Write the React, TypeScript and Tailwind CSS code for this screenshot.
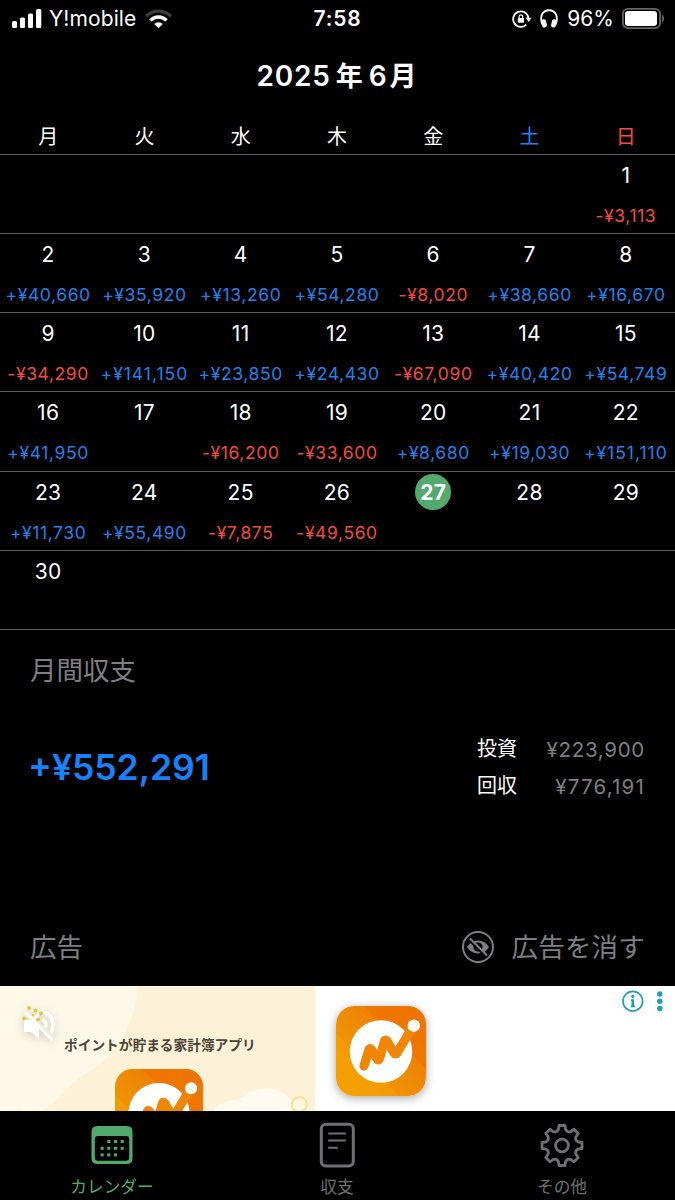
import React from 'react';
import clsx from 'clsx';

interface DayEntry {
  day: number;
  amount?: string;
}

const weekdays = ['月', '火', '水', '木', '金', '土', '日'];

const TODAY = 27;
const LEADING_BLANKS = 6;

const entries: DayEntry[] = [
  { day: 1, amount: '-¥3,113' },
  { day: 2, amount: '+¥40,660' },
  { day: 3, amount: '+¥35,920' },
  { day: 4, amount: '+¥13,260' },
  { day: 5, amount: '+¥54,280' },
  { day: 6, amount: '-¥8,020' },
  { day: 7, amount: '+¥38,660' },
  { day: 8, amount: '+¥16,670' },
  { day: 9, amount: '-¥34,290' },
  { day: 10, amount: '+¥141,150' },
  { day: 11, amount: '+¥23,850' },
  { day: 12, amount: '+¥24,430' },
  { day: 13, amount: '-¥67,090' },
  { day: 14, amount: '+¥40,420' },
  { day: 15, amount: '+¥54,749' },
  { day: 16, amount: '+¥41,950' },
  { day: 17 },
  { day: 18, amount: '-¥16,200' },
  { day: 19, amount: '-¥33,600' },
  { day: 20, amount: '+¥8,680' },
  { day: 21, amount: '+¥19,030' },
  { day: 22, amount: '+¥151,110' },
  { day: 23, amount: '+¥11,730' },
  { day: 24, amount: '+¥55,490' },
  { day: 25, amount: '-¥7,875' },
  { day: 26, amount: '-¥49,560' },
  { day: 27 },
  { day: 28 },
  { day: 29 },
  { day: 30 },
];

const cells: (DayEntry | null)[] = [...Array(LEADING_BLANKS).fill(null), ...entries];
const weeks = Array.from({ length: Math.ceil(cells.length / 7) }, (_, i) =>
  Array.from({ length: 7 }, (_, j) => cells[i * 7 + j] ?? null)
);

// The digit 1 is narrow, so amounts with many of them get looser tracking
const hasManyOnes = (amount: string) => amount.split('1').length > 3;

const StatusBar = () => (
  <div className="grid h-[37px] grid-cols-3 items-center pl-3 pr-[10px] text-[21px] leading-none text-white">
    <div className="flex items-center">
      <svg width="30" height="19" viewBox="0 0 30 19" fill="currentColor">
        <rect x="0" y="12" width="5" height="7" rx="1.5" />
        <rect x="8" y="8.5" width="5" height="10.5" rx="1.5" />
        <rect x="16" y="4.5" width="5" height="14.5" rx="1.5" />
        <rect x="24" y="0" width="5.3" height="19" rx="1.5" />
      </svg>
      <span className="ml-[7px] tracking-[0.1px]">Y!mobile</span>
      <svg className="ml-[9px]" width="27" height="20" viewBox="0 0 27 20" fill="none" strokeWidth="3.4">
        <path d="M1.2 7.2 A17.4 17.4 0 0 1 25.8 7.2" stroke="#3c3c3c" />
        <path d="M5.4 11.4 A11.5 11.5 0 0 1 21.6 11.4" stroke="#fff" />
        <path d="M13.5 19.3 L9.2 15 A6.1 6.1 0 0 1 17.8 15 Z" fill="#fff" />
      </svg>
    </div>
    <div className="pr-0.5 text-center font-semibold tracking-[0.8px]">7:58</div>
    <div className="flex items-center justify-end">
      <svg width="20" height="18" viewBox="0 0 20 18" fill="none" stroke="currentColor">
        <path d="M14.3 14.6 A7.7 7.7 0 1 1 16.5 8.2" strokeWidth="1.7" />
        <path d="M13.6 7.8 H19.6 L16.7 12 Z" fill="currentColor" stroke="none" />
        <rect x="5.8" y="8" width="6.2" height="4.7" rx="0.8" fill="currentColor" stroke="none" />
        <path d="M7.1 8.4 V6.7 A1.8 1.8 0 0 1 10.7 6.7 V8.4" strokeWidth="1.2" />
      </svg>
      <svg className="ml-2" width="18" height="19" viewBox="0 0 18 19" fill="none" stroke="currentColor">
        <path d="M2.6 15.5 C-1 7.5 2.6 1.2 9 1.2 S19 7.5 15.4 15.5" strokeWidth="1.9" />
        <rect x="1.8" y="10.2" width="4.8" height="8.2" rx="2" fill="currentColor" stroke="none" transform="rotate(-14 4.3 14.7)" />
        <rect x="11.4" y="10.2" width="4.8" height="8.2" rx="2" fill="currentColor" stroke="none" transform="rotate(14 13.7 14.7)" />
      </svg>
      <span className="ml-[9px]">96%</span>
      <svg className="ml-[8px]" width="43" height="21" viewBox="0 0 43 21">
        <rect x="0.9" y="0.9" width="37.2" height="19.2" rx="5" fill="none" stroke="#666" strokeWidth="1.8" />
        <rect x="3" y="3" width="32" height="15" rx="3" fill="#fff" />
        <path d="M40 7 C42.8 8 42.8 13 40 14 Z" fill="#666" />
      </svg>
    </div>
  </div>
);

const DayCell = ({ entry }: { entry: DayEntry | null }) => {
  if (!entry) return <div />;
  const isToday = entry.day === TODAY;
  return (
    <div className="flex flex-col items-center">
      <span
        className={clsx(
          'mt-[2px] flex h-9 w-9 items-center justify-center rounded-full pt-px text-[21px] leading-none tracking-[0.3px]',
          isToday ? 'bg-[#52ab6c] font-bold text-white' : 'text-white'
        )}
      >
        {entry.day}
      </span>
      {entry.amount && (
        <span
          className={clsx(
            'mt-[11px] whitespace-nowrap text-[17.5px] leading-[24px]',
            hasManyOnes(entry.amount) ? 'tracking-[1px]' : 'tracking-[0.6px]',
            entry.amount.startsWith('-') ? 'text-[#f14b40]' : 'text-[#2381e8]'
          )}
        >
          {entry.amount}
        </span>
      )}
    </div>
  );
};

const Calendar = () => (
  <section className="border-b border-[#5c5c5e]">
    <div className="grid h-[38px] grid-cols-7 items-center pr-px pt-1 text-center text-[20px] leading-none">
      {weekdays.map(label => (
        <span
          key={label}
          className={clsx(
            label === '土' && 'text-[#1a84f5]',
            label === '日' && 'text-[#f14b40]',
            label !== '土' && label !== '日' && 'text-white'
          )}
        >
          {label}
        </span>
      ))}
    </div>
    {weeks.map((week, i) => (
      <div key={i} className="grid h-[79.15px] grid-cols-7 border-t border-[#5c5c5e] pr-px">
        {week.map((entry, j) => (
          <DayCell key={j} entry={entry} />
        ))}
      </div>
    ))}
  </section>
);

const Summary = () => (
  <section className="h-[273px] px-[30px] pt-5">
    <h2 className="text-[26.5px] leading-[40px] text-[#7f7f83]">月間収支</h2>
    <div className="mt-[41px] flex items-center justify-between">
      <span className="-ml-[2px] text-[35.5px] font-semibold leading-[74px] text-[#1683fb]">+¥552,291</span>
      <div className="text-[20px] leading-[37px]">
        <div className="flex justify-end">
          <span className="text-white">投資</span>
          <span className="w-32 text-right text-[20.5px] tracking-[0.7px] text-[#7f7f83]">¥223,900</span>
        </div>
        <div className="flex justify-end">
          <span className="text-white">回収</span>
          <span className="w-32 text-right text-[20.5px] tracking-[1.2px] text-[#7f7f83]">¥776,191</span>
        </div>
      </div>
    </div>
  </section>
);

const HideAdIcon = () => (
  <svg width="34" height="34" viewBox="0 0 34 34" fill="none">
    <circle cx="17" cy="17" r="15" stroke="#7f7f83" strokeWidth="2" />
    <path d="M6 17 Q10 10.5 17 10.5 Q24 10.5 28 17 Q24 23.5 17 23.5 Q10 23.5 6 17 Z" fill="#7f7f83" />
    <circle cx="17" cy="17" r="4.6" fill="#000" />
    <path d="M8.5 10.5 L24 26" stroke="#000" strokeWidth="2" />
    <path d="M9.5 9 L25.5 25" stroke="#7f7f83" strokeWidth="1.9" strokeLinecap="round" />
  </svg>
);

const AppLogo = ({ id, className }: { id: string; className?: string }) => (
  <svg className={className} viewBox="0 0 90 90">
    <defs>
      <linearGradient id={id} x1="0" y1="1" x2="1" y2="0">
        <stop offset="0" stopColor="#f5a400" />
        <stop offset="0.5" stopColor="#ee8b05" />
        <stop offset="1" stopColor="#ec6c03" />
      </linearGradient>
      <clipPath id={`${id}-clip`}>
        <rect width="90" height="90" rx="18" />
      </clipPath>
    </defs>
    <g clipPath={`url(#${id}-clip)`}>
      <rect width="90" height="90" fill={`url(#${id})`} />
      <path d="M28 0 H90 V63 Z" fill="#ef7400" opacity="0.75" />
      <path d="M0 27 L63 90 H0 Z" fill="#f5a100" opacity="0.6" />
      <circle cx="45" cy="45.5" r="31.3" fill="#fff" />
      <path
        d="M28 60 L33 43.5 Q34 41.5 35.5 43.5 L41 53 Q42.5 55 43.5 52.5 L48.5 35 Q49.5 33 51 35 L58 47 Q59.5 49 61 47 L76 22"
        fill="none"
        stroke="#ef8605"
        strokeWidth="9.2"
        strokeLinecap="round"
        strokeLinejoin="round"
      />
      <circle cx="77.8" cy="19.7" r="6.2" fill="#fff" />
    </g>
  </svg>
);

const MutedIcon = () => (
  <svg width="40" height="42" viewBox="0 0 40 42" fill="none" className="drop-shadow-[0_2px_5px_rgba(0,0,0,0.18)]">
    <path d="M5 17 H11 L20 10 V36 L12 29 H5 Z" fill="#fff" />
    <path d="M24 9 C33 11 37 21 31 31" stroke="#fff" strokeWidth="3.6" />
    <path d="M23 17 C27 18 28 22 26 25" stroke="#fff" strokeWidth="3.6" />
    <path d="M9 8.5 L35 35" stroke="#f3ead2" strokeWidth="2" />
    <path d="M7 10 L33.5 37" stroke="#fff" strokeWidth="3.2" />
    <g fill="#dcc936">
      <circle cx="10" cy="5" r="1.9" />
      <circle cx="16.5" cy="7.5" r="1.9" />
      <circle cx="22" cy="10.5" r="1.9" />
      <circle cx="5" cy="15.5" r="1.9" />
      <circle cx="19" cy="16.5" r="1.9" />
      <circle cx="14" cy="12" r="1.2" />
    </g>
  </svg>
);

const AdBanner = () => (
  <div className="flex h-[125.5px] bg-white">
    <div className="relative h-full w-[315px] overflow-hidden bg-[#fdf2d8]">
      <svg className="absolute inset-0" width="315" height="126" viewBox="0 0 315 126">
        <path d="M0 0 H137 C138 30 119 66 92 84 C66 98 58 119 38 126 H0 Z" fill="#fef8e9" />
        <path d="M213 126 C220 111 239 117 247 108 C262 98 290 100 296 126 Z" fill="#fffaf0" />
        <circle cx="299.3" cy="118.5" r="7.5" fill="#fff8df" stroke="#f5e391" strokeWidth="2" />
        <path d="M14 126 Q19 123 24 126 Z" fill="#f5e58c" />
      </svg>
      <div className="absolute left-[19px] top-[17px]">
        <MutedIcon />
      </div>
      <p className="absolute left-[64px] top-[49px] whitespace-nowrap text-[13.7px] font-bold leading-[20px] text-[#4d4438]">
        ポイントが貯まる家計簿アプリ
      </p>
      <AppLogo id="banner-logo" className="absolute left-[115px] top-[83px] h-[88px] w-[88px]" />
    </div>
    <div className="flex flex-1 items-start justify-between overflow-hidden pl-[21px] pr-[9px]">
      <AppLogo id="store-logo" className="mt-5 h-[90px] w-[90px] rounded-[18px] shadow-[0_2px_10px_rgba(0,0,0,0.35)]" />
      <svg className="mt-1" width="46" height="24" viewBox="0 0 46 24" fill="#1f9db5">
        <circle cx="12.8" cy="11.2" r="9.8" fill="none" stroke="#1f9db5" strokeWidth="1.7" />
        <circle cx="12.8" cy="6.3" r="1.6" />
        <path d="M10.9 9.3 H14.1 V15.6 H15 V17.2 H10.9 V15.6 H11.5 V10.9 H10.9 Z" />
        <circle cx="39.8" cy="4" r="2.7" />
        <circle cx="39.8" cy="11.3" r="2.7" />
        <circle cx="39.8" cy="18.5" r="2.7" />
      </svg>
    </div>
  </div>
);

const CalendarIcon = () => (
  <svg width="44" height="46" viewBox="0 0 44 46" fill="#52ab6c">
    <path
      fillRule="evenodd"
      d="M7.5 4 H36.5 Q42.5 4 42.5 10 V36 Q42.5 42 36.5 42 H7.5 Q1.5 42 1.5 36 V10 Q1.5 4 7.5 4 Z M8 14 Q4.8 14 4.8 17 V35.5 Q4.8 38.7 8 38.7 H36 Q39.2 38.7 39.2 35.5 V17 Q39.2 14 36 14 Z"
    />
    {[17.3, 24, 30.7].map(x => <rect key={x} x={x} y="18" width="3" height="3" />)}
    {[10.6, 17.3, 24, 30.7].map(x => <rect key={x} x={x} y="24.8" width="3" height="3" />)}
    {[10.6, 17.3, 24].map(x => <rect key={x} x={x} y="31.4" width="3" height="3" />)}
  </svg>
);

const NoteIcon = () => (
  <svg width="44" height="46" viewBox="0 0 44 46" fill="none" stroke="#707074">
    <rect x="6.3" y="2.3" width="32" height="41.6" rx="4.5" strokeWidth="3" />
    <path d="M13.2 11.5 H30.8 M13.2 18.4 H30.8 M13.2 25.7 H22.8" strokeWidth="2" />
  </svg>
);

const GearIcon = () => {
  const profile = [[-5.4, -14], [-3.6, -16], [-3, -20], [3, -20], [3.6, -16], [5.4, -14]];
  const points = Array.from({ length: 8 }, (_, i) => {
    const a = (i * Math.PI) / 4;
    return profile
      .map(([x, y]) => `${x * Math.cos(a) - y * Math.sin(a)},${x * Math.sin(a) + y * Math.cos(a)}`)
      .join(' ');
  }).join(' ');
  return (
    <svg width="44" height="46" viewBox="-22 -23.5 44 46" fill="none" stroke="#707074" strokeWidth="2.8">
      <polygon points={points} strokeLinejoin="round" />
      <circle r="6.4" />
    </svg>
  );
};

const tabs = [
  { name: 'カレンダー', icon: CalendarIcon, active: true },
  { name: '収支', icon: NoteIcon, active: false },
  { name: 'その他', icon: GearIcon, active: false },
];

const TabBar = () => (
  <nav className="grid flex-1 grid-cols-3 pt-[11px]">
    {tabs.map(tab => {
      const Icon = tab.icon;
      return (
        <div key={tab.name} className="flex flex-col items-center pr-px">
          <Icon />
          <span
            className={clsx(
              'mt-[7px] text-[16.7px] leading-[24px]',
              tab.active ? 'text-[#52ab6c]' : 'text-[#707074]'
            )}
          >
            {tab.name}
          </span>
        </div>
      );
    })}
  </nav>
);

export default function App() {
  return (
    <div className="flex h-[1200px] w-[675px] flex-col overflow-hidden bg-black font-['Inter','Noto_Sans_CJK_JP',sans-serif]">
      <StatusBar />
      <h1 className="h-[79px] pr-0.5 text-center text-[27px] font-semibold leading-[79px] text-white">
        <span className="text-[28px] tracking-[0.8px]">2025</span>
        <span className="ml-[5px] mr-[6px]">年</span>
        <span className="text-[28px]">6</span>
        <span className="ml-[3px]">月</span>
      </h1>
      <Calendar />
      <Summary />
      <div className="flex h-[83px] items-center justify-between px-[30px] pt-[5px] text-[26.5px] leading-none text-[#7f7f83]">
        <span>広告</span>
        <div className="flex items-center gap-[17px]">
          <HideAdIcon />
          <span className="tracking-[0.2px]">広告を消す</span>
        </div>
      </div>
      <AdBanner />
      <TabBar />
    </div>
  );
}
